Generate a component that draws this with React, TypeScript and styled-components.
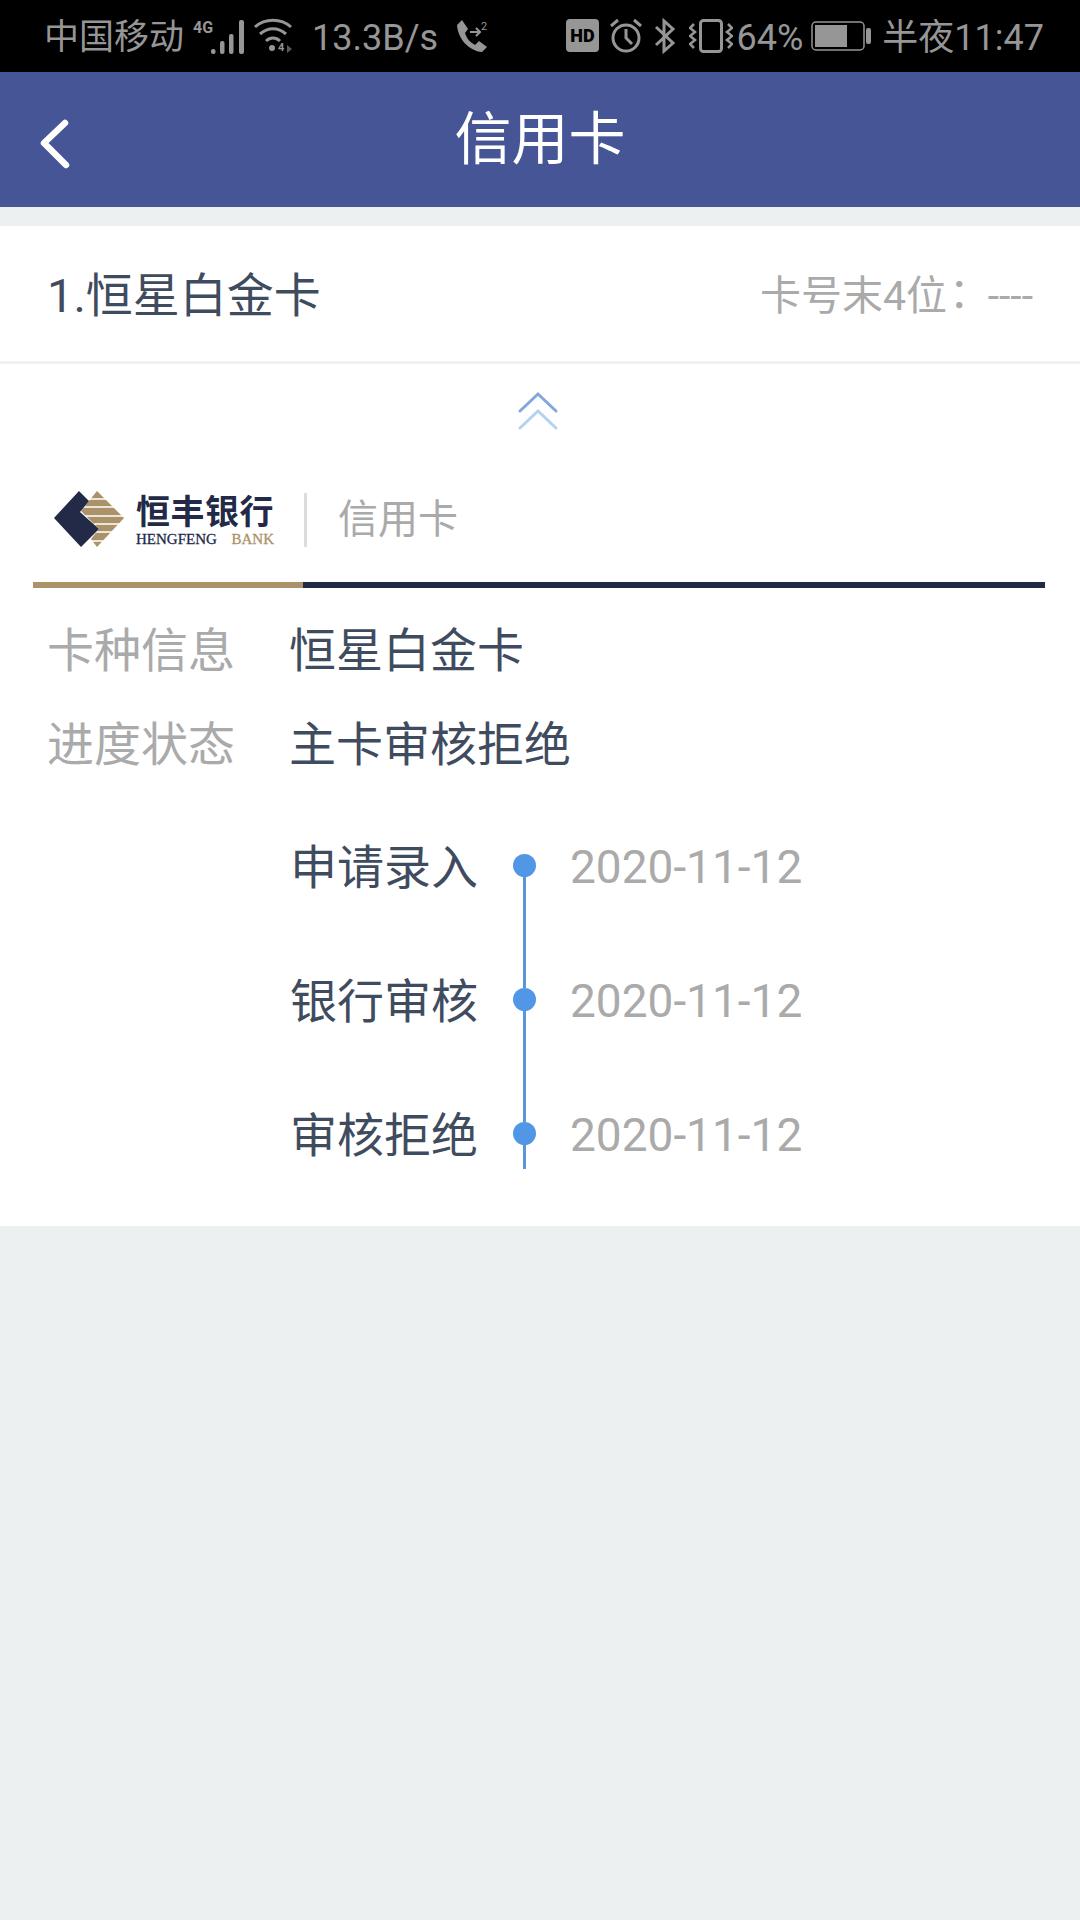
import { createGlobalStyle } from "styled-components";
import styled from "styled-components";

const GlobalStyle = createGlobalStyle`
  html, body {
    margin: 0;
    padding: 0;
    background: #ecf0f1;
  }
  * {
    box-sizing: border-box;
  }
`;

const Page = styled.div`
  width: 1080px;
  height: 1920px;
  overflow: hidden;
  background: #ecf0f1;
  font-family: Roboto, "Noto Sans CJK SC", sans-serif;
  display: flex;
  flex-direction: column;
`;

const StatusBar = styled.div`
  height: 72px;
  background: #000;
  color: #969696;
  font-size: 36px;
  display: flex;
  align-items: center;
  justify-content: space-between;
  padding: 0 36px 0 44px;
`;

const StatusGroup = styled.div`
  display: flex;
  align-items: center;
`;

const StatusText = styled.span<{ $left?: number; $size?: number }>`
  line-height: 68px;
  padding-top: 4px;
  white-space: nowrap;
  margin-left: ${(p) => p.$left ?? 0}px;
  font-size: ${(p) => p.$size ?? 36}px;
`;

const StatusIcon = styled.svg<{ $left?: number }>`
  display: block;
  flex: none;
  margin-left: ${(p) => p.$left ?? 0}px;
`;

const Header = styled.header`
  height: 135px;
  background: #465596;
  display: flex;
  align-items: center;
  justify-content: center;
  position: relative;
`;

const BackIcon = styled.svg`
  position: absolute;
  left: 38px;
  top: 46px;
`;

const Title = styled.h1`
  margin: 0;
  font-size: 57px;
  font-weight: 400;
  color: #fff;
  line-height: 1;
`;

const Summary = styled.div`
  margin-top: 19px;
  height: 138px;
  background: #fff;
  border-bottom: 3px solid #eff1f2;
  display: flex;
  align-items: center;
  justify-content: space-between;
  padding: 0 47px 4px 47px;
`;

const CardName = styled.span`
  font-size: 47px;
  color: #3f4c60;
`;

const CardTail = styled.span`
  font-size: 41px;
  color: #aaa;
`;

const TailColon = styled.span`
  font-family: "Noto Sans CJK TC", sans-serif;
  font-feature-settings: "halt";
  margin: 0 8px 0 2px;
`;

const Panel = styled.section`
  background: #fff;
  height: 862px;
  padding: 27px 35px 0 33px;
`;

const Collapse = styled.div`
  display: flex;
  justify-content: center;
  padding-right: 2px;
`;

const LogoRow = styled.div`
  display: flex;
  align-items: center;
  height: 57px;
  margin-top: 60px;
  padding-left: 21px;
`;

const BankName = styled.div`
  margin-left: 11px;
  display: flex;
  flex-direction: column;
  width: 138px;
`;

const BankCn = styled.span`
  font-size: 34px;
  line-height: 38px;
  font-weight: 700;
  letter-spacing: 0.5px;
  color: #222a48;
  white-space: nowrap;
`;

const BankEn = styled.span`
  font-family: "Liberation Serif", serif;
  font-size: 15px;
  -webkit-text-stroke: 0.3px currentColor;
  line-height: 15px;
  color: #222a48;
  white-space: nowrap;
  display: flex;
  justify-content: space-between;
  margin-top: 1px;
`;

const BankEnGold = styled.span`
  color: #ab9269;
`;

const LogoDivider = styled.div`
  width: 3px;
  height: 54px;
  margin-left: 30px;
  background: #dcdcdc;
`;

const LogoLabel = styled.span`
  margin-left: 31px;
  font-size: 40px;
  line-height: 56px;
  color: #aaa;
`;

const Rule = styled.div`
  display: flex;
  height: 6px;
  margin-top: 34px;
  background: #222a48;
`;

const RuleGold = styled.div`
  width: 270px;
  background: #ab9269;
`;

const InfoRow = styled.div<{ $top: number }>`
  display: flex;
  align-items: center;
  height: 60px;
  margin-top: ${(p) => p.$top}px;
  padding-left: 14px;
  font-size: 47px;
`;

const InfoLabel = styled.span`
  width: 242px;
  color: #aaa;
`;

const InfoValue = styled.span`
  color: #3f4c60;
`;

const Timeline = styled.div`
  margin-top: 84px;
`;

const Step = styled.div<{ $last?: boolean }>`
  display: flex;
  height: ${(p) => (p.$last ? 47 : 134)}px;
`;

const StepLabel = styled.span`
  width: 445px;
  height: 23px;
  margin-top: 2px;
  line-height: 23px;
  text-align: right;
  font-size: 47px;
  color: #3f4c60;
`;

const Track = styled.div`
  width: 23px;
  margin-left: 35px;
  display: flex;
  flex-direction: column;
  align-items: center;
`;

const Dot = styled.div`
  width: 23px;
  height: 23px;
  border-radius: 50%;
  background: #5297e6;
  flex: none;
`;

const TrackLine = styled.div`
  width: 3px;
  flex: 1;
  background: #5a97d8;
`;

const StepDate = styled.span`
  margin: 2px 0 0 34px;
  height: 23px;
  line-height: 23px;
  font-size: 46px;
  color: #aaa;
`;

const steps = [
  { label: "申请录入", date: "2020-11-12" },
  { label: "银行审核", date: "2020-11-12" },
  { label: "审核拒绝", date: "2020-11-12" },
];

const App = () => {
  return (
    <Page>
      <GlobalStyle />
      <StatusBar>
        <StatusGroup>
          <StatusText $size={35}>中国移动</StatusText>
          <StatusIcon $left={8} width="54" height="36" viewBox="0 0 54 36">
            <text x="1" y="15" fontSize="16" fontWeight="700" fontFamily="Roboto" fill="#969696">4G</text>
            <g fill="#969696">
              <rect x="19" y="31" width="4.5" height="5" rx="2" />
              <rect x="28" y="23" width="4.5" height="13" rx="2" />
              <rect x="37" y="16" width="4.5" height="20" rx="2" />
              <rect x="47" y="2" width="5" height="34" rx="2" />
            </g>
          </StatusIcon>
          <StatusIcon $left={7} width="40" height="36" viewBox="0 0 40 36" fill="none" stroke="#969696" strokeWidth="3">
            <path d="M2 9 C12 0 28 0 38 9" />
            <path d="M7 16 C15 9 25 9 33 16" />
            <path d="M13 23 C17 19 23 19 27 23" />
            <circle cx="19" cy="30" r="3" fill="#969696" stroke="none" />
            <text x="25" y="33" fontSize="11" fontWeight="700" fontFamily="Roboto" fill="#969696" stroke="none">4</text>
            <path d="M34 27 V35 L39 31 Z" fill="#5a5a5a" stroke="none" />
          </StatusIcon>
          <StatusText $left={19}>13.3B/s</StatusText>
          <StatusIcon $left={18} width="32" height="34" viewBox="0 0 32 34" fill="none">
            <path d="M1 6 L6 1 L12 10 L9 14 C11 20 14 23 19 26 L23 22 L31 28 L26 33 C13 32 2 20 1 6 Z" fill="#969696" />
            <path d="M14 13 H23 M20 9 L24 13 L20 17" stroke="#969696" strokeWidth="2" />
            <text x="25" y="11" fontSize="11" fontFamily="Roboto" fill="#969696">2</text>
          </StatusIcon>
        </StatusGroup>
        <StatusGroup>
          <StatusIcon width="33" height="34" viewBox="0 0 33 34">
            <rect x="0" y="0" width="33" height="33" rx="4" fill="#969696" />
            <text x="16.5" y="23" textAnchor="middle" fontSize="18" fontWeight="900" fontFamily="Roboto" fill="#000">HD</text>
          </StatusIcon>
          <StatusIcon $left={10} width="34" height="36" viewBox="0 0 34 36" fill="none" stroke="#969696" strokeWidth="3">
            <circle cx="17" cy="20" r="13" />
            <path d="M17 11 V20 L23 26" />
            <path d="M2 8 L9 2 M32 8 L25 2" />
          </StatusIcon>
          <StatusIcon $left={11} width="22" height="36" viewBox="0 0 22 36" fill="none" stroke="#969696" strokeWidth="3">
            <path d="M2 9 L19 25 L10 33 V3 L19 11 L2 27" />
          </StatusIcon>
          <StatusIcon $left={13} width="44" height="34" viewBox="0 0 44 34" fill="none" stroke="#969696">
            <rect x="11.5" y="1.5" width="21" height="31" rx="3" strokeWidth="3" />
            <path d="M5 5 L1 9 L6 13 L1 17 L6 21 L1 25 L5 29" strokeWidth="2.5" />
            <path d="M39 5 L43 9 L38 13 L43 17 L38 21 L43 25 L39 29" strokeWidth="2.5" />
          </StatusIcon>
          <StatusText $left={4}>64%</StatusText>
          <StatusIcon $left={8} width="60" height="30" viewBox="0 0 60 30" fill="none">
            <rect x="1" y="1" width="52" height="28" rx="4" stroke="#969696" strokeWidth="1.5" />
            <rect x="4" y="4" width="32" height="22" fill="#969696" />
            <rect x="55" y="7" width="5" height="16" rx="2" fill="#969696" />
          </StatusIcon>
          <StatusText $left={11}>半夜11:47</StatusText>
        </StatusGroup>
      </StatusBar>

      <Header>
        <BackIcon width="36" height="52" viewBox="0 0 36 52" fill="none">
          <path d="M27 5 L6 25 L28 47" stroke="#fff" strokeWidth="6.5" strokeLinecap="round" strokeLinejoin="round" />
        </BackIcon>
        <Title>信用卡</Title>
      </Header>

      <Summary>
        <CardName>1.恒星白金卡</CardName>
        <CardTail>
          卡号末4位<TailColon>：</TailColon> ----
        </CardTail>
      </Summary>

      <Panel>
        <Collapse>
          <svg width="44" height="40" viewBox="0 0 44 40" fill="none" strokeWidth="3" strokeLinecap="round">
            <path d="M4 20 L22 3 L40 20" stroke="#7fa9dc" />
            <path d="M4 37 L22 20 L40 37" stroke="#b3d2f2" />
          </svg>
        </Collapse>

        <LogoRow>
          <svg width="71" height="57" viewBox="0 0 71 57">
            <path d="M43 0 L70 27 L43 56 L37 48 L45 38 L27 20 Z" fill="#ab9269" />
            <path d="M30 8 H60 M24 16 H66 M24 25 H70 M40 33 H70 M40 41 H60 M36 50 H50" stroke="#fff" strokeWidth="1.5" />
            <path d="M0 27 L25 0 L35 10 L26 21 L45 38 L27 56 Z" fill="#222a48" />
          </svg>
          <BankName>
            <BankCn>恒丰银行</BankCn>
            <BankEn>
              <span>HENGFENG</span>
              <BankEnGold>BANK</BankEnGold>
            </BankEn>
          </BankName>
          <LogoDivider />
          <LogoLabel>信用卡</LogoLabel>
        </LogoRow>

        <Rule>
          <RuleGold />
        </Rule>

        <InfoRow $top={28}>
          <InfoLabel>卡种信息</InfoLabel>
          <InfoValue>恒星白金卡</InfoValue>
        </InfoRow>
        <InfoRow $top={34}>
          <InfoLabel>进度状态</InfoLabel>
          <InfoValue>主卡审核拒绝</InfoValue>
        </InfoRow>

        <Timeline>
          {steps.map((step, i) => (
            <Step key={step.label} $last={i === steps.length - 1}>
              <StepLabel>{step.label}</StepLabel>
              <Track>
                <Dot />
                <TrackLine />
              </Track>
              <StepDate>{step.date}</StepDate>
            </Step>
          ))}
        </Timeline>
      </Panel>
    </Page>
  );
};

export default App;
